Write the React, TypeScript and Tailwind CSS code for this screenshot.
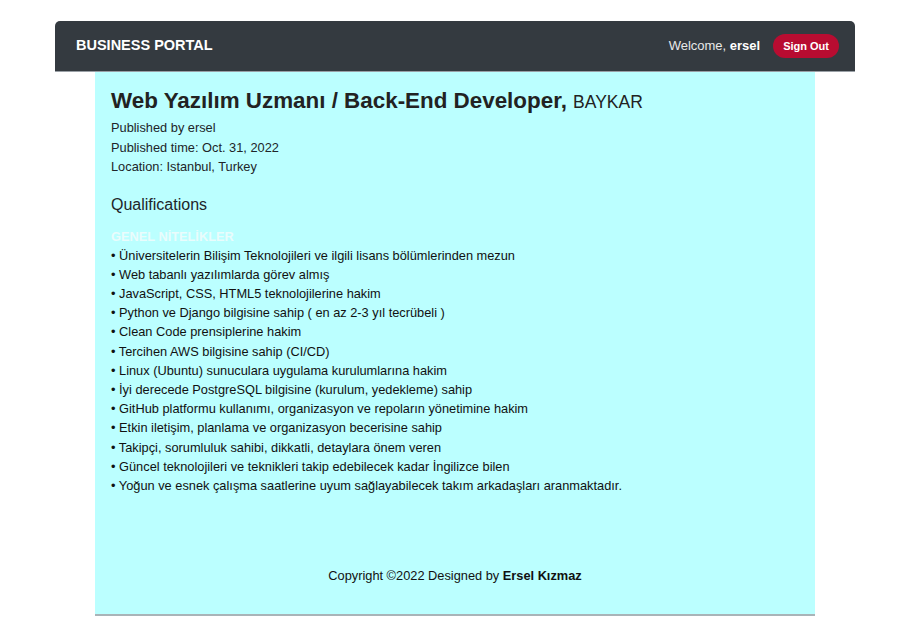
const items = [
  "Üniversitelerin Bilişim Teknolojileri ve ilgili lisans bölümlerinden mezun",
  "Web tabanlı yazılımlarda görev almış",
  "JavaScript, CSS, HTML5 teknolojilerine hakim",
  "Python ve Django bilgisine sahip ( en az 2-3 yıl tecrübeli )",
  "Clean Code prensiplerine hakim",
  "Tercihen AWS bilgisine sahip (CI/CD)",
  "Linux (Ubuntu) sunuculara uygulama kurulumlarına hakim",
  "İyi derecede PostgreSQL bilgisine (kurulum, yedekleme) sahip",
  "GitHub platformu kullanımı, organizasyon ve repoların yönetimine hakim",
  "Etkin iletişim, planlama ve organizasyon becerisine sahip",
  "Takipçi, sorumluluk sahibi, dikkatli, detaylara önem veren",
  "Güncel teknolojileri ve teknikleri takip edebilecek kadar İngilizce bilen",
  "Yoğun ve esnek çalışma saatlerine uyum sağlayabilecek takım arkadaşları aranmaktadır.",
];

export default function App() {
  return (
    <div className="min-h-screen bg-white pt-[21px] font-['Liberation_Sans',Arial,sans-serif] text-[#212529]">
      <nav className="ml-[55px] flex h-[51px] w-[800px] items-center justify-between rounded-t-[5px] border-b border-[#9aa0a6] bg-[#343a40] pl-[21px] pr-[16px]">
        <span className="text-[14.5px] font-bold text-white">BUSINESS PORTAL</span>
        <div className="flex items-center gap-[13px]">
          <span className="text-[13px] text-[#e8e8e8]">
            Welcome, <b className="text-white">ersel</b>
          </span>
          <button className="h-[24px] rounded-full bg-[#b80c31] px-[10px] text-[11px] font-bold text-white">
            Sign Out
          </button>
        </div>
      </nav>
      <main className="ml-[95px] flex h-[544px] w-[720px] flex-col border-b-2 border-[#a9b4b8] bg-[#bbffff] px-[16px] pt-[16px]">
        <h1 className="text-[22.4px] leading-[26px] text-[#222]">
          <span className="font-bold">Web Yazılım Uzmanı / Back-End Developer,</span>{" "}
          <span className="text-[17.5px]">BAYKAR</span>
        </h1>
        <div className="mt-[3px] text-[12.8px] leading-[19.5px]">
          <p>Published by ersel</p>
          <p>Published time: Oct. 31, 2022</p>
          <p>Location: Istanbul, Turkey</p>
        </div>
        <h2 className="mt-[18px] text-[16px] leading-[20px]">Qualifications</h2>
        <p className="mt-[13px] text-[12.8px] font-bold leading-[18px] text-[#eafcfc]">GENEL NİTELİKLER</p>
        <ul className="text-[12.8px] leading-[19.2px] text-[#111]">
          {items.map((item, index) => (
            <li key={index}>• {item}</li>
          ))}
        </ul>
        <footer className="mt-[71px] text-center text-[12.8px] text-[#111]">
          Copyright ©2022 Designed by <b>Ersel Kızmaz</b>
        </footer>
      </main>
    </div>
  );
}
